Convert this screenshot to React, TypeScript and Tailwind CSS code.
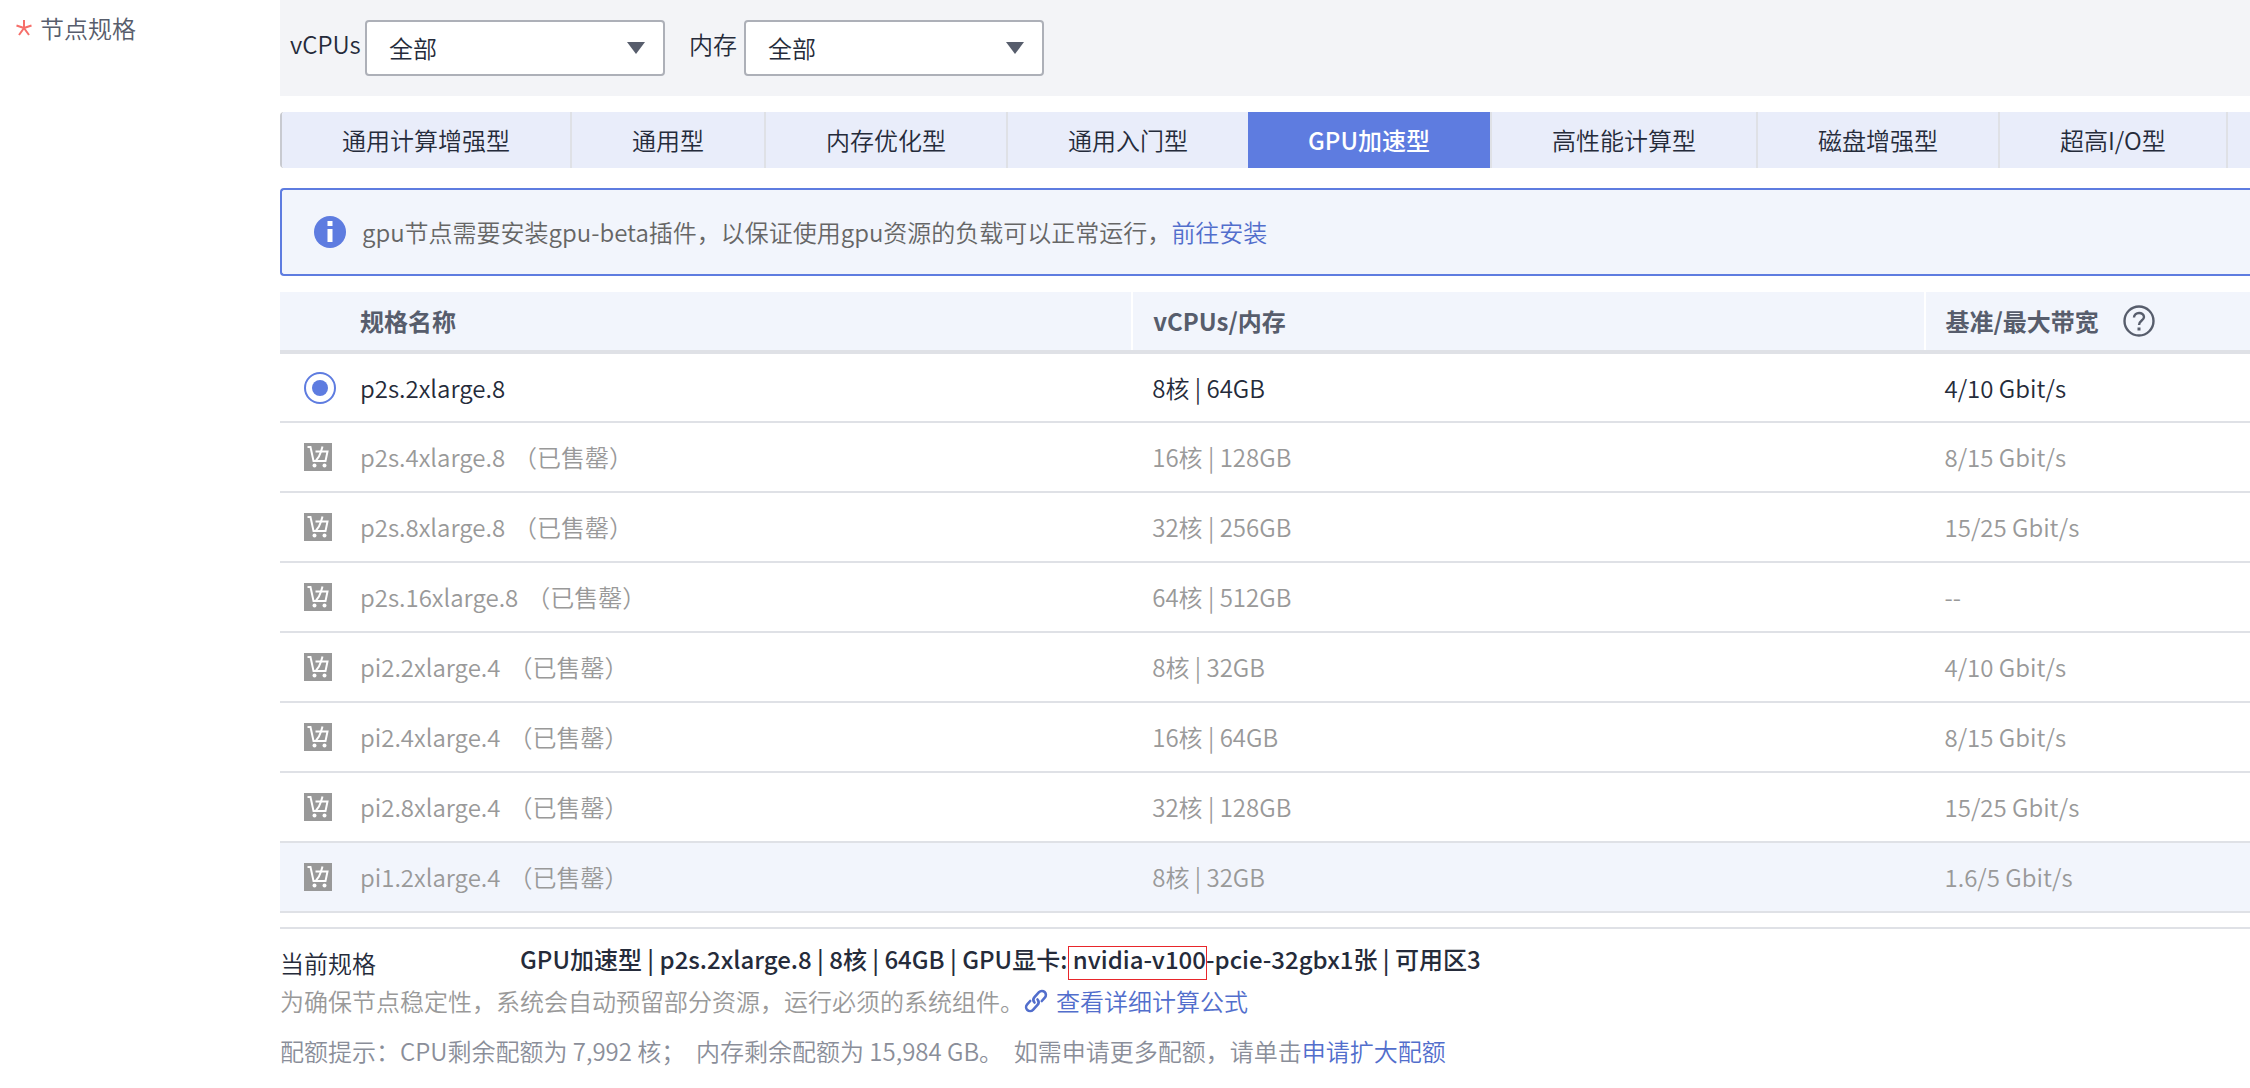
import { useState } from 'react'
import clsx from 'clsx'

const flavors = [
  '通用计算增强型',
  '通用型',
  '内存优化型',
  '通用入门型',
  'GPU加速型',
  '高性能计算型',
  '磁盘增强型',
  '超高I/O型',
]

const specs = [
  { name: 'p2s.2xlarge.8', size: '8核 | 64GB', bandwidth: '4/10 Gbit/s' },
  {
    name: 'p2s.4xlarge.8',
    size: '16核 | 128GB',
    bandwidth: '8/15 Gbit/s',
    soldOut: true,
  },
  {
    name: 'p2s.8xlarge.8',
    size: '32核 | 256GB',
    bandwidth: '15/25 Gbit/s',
    soldOut: true,
  },
  {
    name: 'p2s.16xlarge.8',
    size: '64核 | 512GB',
    bandwidth: '--',
    soldOut: true,
  },
  {
    name: 'pi2.2xlarge.4',
    size: '8核 | 32GB',
    bandwidth: '4/10 Gbit/s',
    soldOut: true,
  },
  {
    name: 'pi2.4xlarge.4',
    size: '16核 | 64GB',
    bandwidth: '8/15 Gbit/s',
    soldOut: true,
  },
  {
    name: 'pi2.8xlarge.4',
    size: '32核 | 128GB',
    bandwidth: '15/25 Gbit/s',
    soldOut: true,
  },
  {
    name: 'pi1.2xlarge.4',
    size: '8核 | 32GB',
    bandwidth: '1.6/5 Gbit/s',
    soldOut: true,
    highlighted: true,
  },
]

function FilterSelect({
  id,
  label,
  labelWidth,
}: {
  id: string
  label: string
  labelWidth: string
}) {
  return (
    <div className="flex items-center">
      <label htmlFor={id} className={clsx('pb-2 leading-8', labelWidth)}>
        {label}
      </label>
      <div className="relative">
        <select
          id={id}
          className="h-14 w-[300px] appearance-none rounded border-2 border-[#adb0b8] bg-white px-[22px]"
        >
          <option>全部</option>
        </select>
        <svg
          viewBox="0 0 18 12"
          className="pointer-events-none absolute top-[22px] right-5 h-3 w-[18px] fill-[#575d6c]"
        >
          <path d="M0 0h18l-9 12z" />
        </svg>
      </div>
    </div>
  )
}

function SoldOutIcon() {
  return (
    <svg viewBox="0 0 28 28" className="size-7" aria-hidden="true">
      <rect width="28" height="28" fill="#999" />
      <g fill="none" stroke="#fff" strokeWidth="2">
        <path d="M3.500 4h3L9.500 18H21.500l2-9.500H11.500" />
        <path d="M18.500 3.500L17 8.500c-1 3.500-2.500 6.500-5 9" />
      </g>
      <circle cx="10.500" cy="22.500" r="2" fill="#fff" />
      <circle cx="20.500" cy="22.500" r="2" fill="#fff" />
    </svg>
  )
}

function InfoIcon() {
  return (
    <svg viewBox="0 0 32 32" className="size-8" aria-hidden="true">
      <circle cx="16" cy="16" r="16" fill="#5e7ce0" />
      <path d="M13.500 5h5v5h-5zM13.500 13h5v13h-5z" fill="#fff" />
    </svg>
  )
}

function HelpIcon() {
  return (
    <svg
      viewBox="0 0 32 32"
      className="size-8"
      fill="none"
      stroke="#575d6c"
      strokeWidth="2.4"
      aria-hidden="true"
    >
      <circle cx="16" cy="16" r="14.500" />
      <path d="M11 12.500c0-6 10-6 10-.5 0 3.500-5 3.500-5 8" />
      <path d="M16 22.500v3" strokeWidth="3" />
    </svg>
  )
}

function LinkIcon() {
  return (
    <svg
      viewBox="0 0 24 24"
      className="size-6"
      fill="none"
      stroke="#526ecc"
      strokeWidth="2.600"
      strokeLinecap="round"
      aria-hidden="true"
    >
      <path d="M10.500 13.500a4.200 4.200 0 0 1 0-5.500l4.500-4.800a3.900 3.900 0 0 1 5.800 5.500l-3 3.300" />
      <path d="M13.500 10.500a4.200 4.200 0 0 1 0 5.500L9 20.800a3.900 3.900 0 0 1-5.800-5.500l3-3.300" />
    </svg>
  )
}

export default function App() {
  const [flavor, setFlavor] = useState('GPU加速型')
  const [spec, setSpec] = useState('p2s.2xlarge.8')

  return (
    <div className="flex overflow-hidden bg-white font-['Noto_Sans_CJK_SC',sans-serif] text-2xl font-[350] text-[#252b3a]">
      <div className="flex w-[280px] shrink-0 items-start gap-2 pt-3 pl-4 leading-8 text-[#575d6c]">
        <svg
          viewBox="0 0 16 16"
          className="mt-2 size-4 stroke-[#f66f6a] stroke-2"
          aria-label="必填"
        >
          <path d="M8 0v8M8 8L.5 5.500M8 8l7.500-2.500M8 8l-5 7M8 8l5 7" />
        </svg>
        <span>节点规格</span>
      </div>

      <main className="min-w-0 flex-1">
        <div className="flex h-24 items-start gap-6 bg-[#f3f4f7] pt-5 pl-[10px]">
          <FilterSelect id="vcpus" label="vCPUs" labelWidth="w-[75px]" />
          <FilterSelect id="memory" label="内存" labelWidth="w-[55px]" />
        </div>

        <div className="mt-4 flex h-14 overflow-hidden rounded-l border-l-2 border-[#c8cad0]">
          {flavors.map((item) => (
            <button
              key={item}
              type="button"
              onClick={() => setFlavor(item)}
              className={clsx(
                'shrink-0 cursor-pointer border-r-2 border-[#dfe1e6] px-[60px] whitespace-nowrap',
                item === flavor
                  ? '-ml-0.5 bg-[#5e7ce0] font-medium text-white'
                  : 'bg-[#e9edfa]',
              )}
            >
              {item}
            </button>
          ))}
          <div className="flex-1 bg-[#e9edfa]" />
        </div>

        <div className="mt-5 flex h-[88px] items-center gap-4 rounded-l border-2 border-r-0 border-[#5e7ce0] bg-[#f2f5fc] pl-8 text-[#666]">
          <InfoIcon />
          <p>
            gpu节点需要安装gpu-beta插件，以保证使用gpu资源的负载可以正常运行，
            <a href="#install" className="text-[#526ecc]">
              前往安装
            </a>
          </p>
        </div>

        <div className="mt-4 overflow-hidden">
          <table className="w-[calc(124%-6px)] table-fixed text-left">
            <colgroup>
              <col className="w-15" />
              <col />
              <col />
              <col />
            </colgroup>
            <thead>
              <tr className="h-[60px] border-b-4 border-[#dfe1e6] bg-[#f2f5fc] text-[#575d6c]">
                <td />
                <th className="px-5">规格名称</th>
                <th className="border-l-2 border-white px-5">vCPUs/内存</th>
                <th className="border-l-2 border-white px-5">
                  <span className="flex items-center gap-6">
                    基准/最大带宽
                    <HelpIcon />
                  </span>
                </th>
              </tr>
            </thead>
            <tbody>
              {specs.map((item) => (
                <tr
                  key={item.name}
                  className={clsx(
                    'h-[70px] border-b-2 border-[#dfe1e6]',
                    item.soldOut && 'text-[#999]',
                    item.highlighted && 'bg-[#f2f5fc]',
                  )}
                >
                  <td className="pl-6">
                    {item.soldOut ? (
                      <SoldOutIcon />
                    ) : (
                      <input
                        type="radio"
                        name="spec"
                        id={item.name}
                        checked={spec === item.name}
                        onChange={() => setSpec(item.name)}
                        className="block size-8 appearance-none rounded-full border-2 border-[#5e7ce0] p-1.5 checked:bg-[#5e7ce0] checked:bg-clip-content"
                      />
                    )}
                  </td>
                  <td className="px-5">
                    <label htmlFor={item.name}>{item.name}</label>
                    {item.soldOut && <span className="ml-2">（已售罄）</span>}
                  </td>
                  <td className="px-5">{item.size}</td>
                  <td className="px-5">{item.bandwidth}</td>
                </tr>
              ))}
            </tbody>
          </table>
        </div>

        <div className="mt-[14px] border-t-2 border-[#dfe1e6] pt-4">
          <div className="flex h-9 items-center">
            <span className="w-60">当前规格</span>
            <strong className="pb-1 leading-8 font-medium">
              GPU加速型 | p2s.2xlarge.8 | 8核 | 64GB | GPU显卡:{' '}
              <span className="-ml-1 inline-block pb-2 pl-1 leading-6 outline outline-[#e8262b]">
                nvidia-v100
              </span>
              -pcie-32gbx1张 | 可用区3
            </strong>
          </div>
          <p className="flex h-10 items-center text-[#999]">
            为确保节点稳定性，系统会自动预留部分资源，运行必须的系统组件。
            <a
              href="#formula"
              className="flex items-center gap-2 text-[#526ecc]"
            >
              <LinkIcon />
              查看详细计算公式
            </a>
          </p>
          <p className="mt-3 h-9 leading-9 text-[#8a8e99]">
            配额提示：CPU剩余配额为 7,992 核；&nbsp; 内存剩余配额为 15,984
            GB。&nbsp; 如需申请更多配额，请单击
            <a href="#quota" className="text-[#526ecc]">
              申请扩大配额
            </a>
          </p>
        </div>
      </main>
    </div>
  )
}
